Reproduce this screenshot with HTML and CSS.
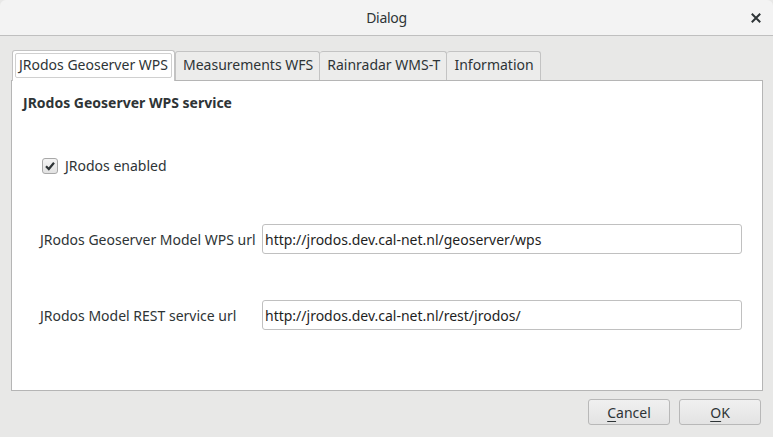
FILE: index.html
```html
<!DOCTYPE html>
<html>
<head>
<meta charset="utf-8">
<link rel="stylesheet" href="styles.css">
</head>
<body>
<div class="window">
  <div class="titlebar">
    <span class="title">Dialog</span>
    <span class="close">
      <svg width="10" height="10" viewBox="0 0 10 10"><path d="M1.5 1.5 L8.5 8.5 M8.5 1.5 L1.5 8.5" stroke="#2e3436" stroke-width="2" stroke-linecap="square"/></svg>
    </span>
  </div>
  <div class="content">
    <div class="tabs">
      <div class="tab active">JRodos Geoserver WPS</div>
      <div class="tab">Measurements WFS</div>
      <div class="tab">Rainradar WMS-T</div>
      <div class="tab">Information</div>
    </div>
    <div class="panel">
      <div class="heading">JRodos Geoserver WPS service</div>
      <label class="check">
        <span class="box">
          <svg width="12" height="12" viewBox="0 0 12 12"><path d="M2 6.2 L4.8 9 L10 2.8" fill="none" stroke="#2e3436" stroke-width="2.2"/></svg>
        </span>
        <span>JRodos enabled</span>
      </label>
      <div class="row row1">
        <span class="lbl">JRodos Geoserver Model WPS url</span>
        <div class="input">http://jrodos.dev.cal-net.nl/geoserver/wps</div>
      </div>
      <div class="row row2">
        <span class="lbl">JRodos Model REST service url</span>
        <div class="input">http://jrodos.dev.cal-net.nl/rest/jrodos/</div>
      </div>
    </div>
    <div class="buttons">
      <div class="btn"><u>C</u>ancel</div>
      <div class="btn"><u>O</u>K</div>
    </div>
  </div>
</div>
</body>
</html>
```
FILE: styles.css
```css
* { box-sizing: border-box; }
html, body { margin: 0; padding: 0; background: #e8e8e7; }
body {
  font-family: "Noto Sans", "Open Sans", sans-serif;
  font-size: 14px;
  color: #2e3436;
  width: 773px;
  height: 437px;
  overflow: hidden;
}
.window { width: 773px; height: 437px; display: flex; flex-direction: column; }
.titlebar {
  height: 36px;
  background: #f3f3f3;
  border-bottom: 1px solid #bfbfbf;
  border-radius: 6px 6px 0 0;
  display: flex;
  align-items: center;
  justify-content: center;
  position: relative;
  flex: none;
}
.title { font-size: 14px; color: #2e3436; letter-spacing: -0.3px; margin-top: -1px; }
.close { position: absolute; right: 12px; top: 13px; width: 10px; height: 10px; display: flex; }
.content { flex: 1; display: flex; flex-direction: column; padding: 13px 10px 0 11px; }
.tabs { display: flex; height: 31px; padding-left: 1px; align-items: flex-end; }
.tab {
  height: 29px;
  padding: 0 6px 3px 7px;
  border: 1px solid #c3c3c3;
  border-bottom: none;
  border-left: none;
  background: #ececeb;
  display: flex;
  align-items: center;
  border-radius: 3px 3px 0 0;
  color: #2e3436;
  white-space: nowrap;
}
.tab:nth-child(2) { border-left: 1px solid #c3c3c3; }
.tab.active {
  height: 31px;
  background: #ffffff;
  border: 1px solid #c3c3c3;
  border-bottom: none;
  padding: 0 6px 3px 6px;
  position: relative;
  z-index: 1;
  margin-bottom: -1px;
}
.tab.active::after {
  content: "";
  position: absolute;
  left: 2px; right: 2px; top: 2px; bottom: 3px;
  border: 1px solid #d0d0d0;
  border-radius: 2px;
}
.panel {
  height: 311px;
  background: #ffffff;
  border: 1px solid #b5b5b5;
  display: flex;
  flex-direction: column;
  padding: 12px 0 0 11px;
}
.heading { font-weight: bold; font-size: 14px; line-height: 20px; }
.check { display: flex; align-items: center; gap: 7px; margin: 43px 0 0 19px; line-height: 20px; }
.box {
  width: 16px; height: 16px;
  border: 1px solid #a8a8a8;
  border-radius: 3px;
  background: linear-gradient(#f4f4f4, #e2e2e2);
  display: flex; align-items: center; justify-content: center;
}
.row { display: flex; align-items: center; margin-left: 17px; }
.row1 { margin-top: 48px; }
.row2 { margin-top: 46px; }
.lbl { width: 222px; flex: none; }
.input {
  width: 480px;
  height: 30px;
  border: 1px solid #c0c0c0;
  border-radius: 3px;
  background: #fff;
  display: flex;
  align-items: center;
  padding-left: 2px;
  color: #1e1e1e;
}
.buttons { display: flex; justify-content: flex-end; gap: 9px; margin-top: 8px; padding-right: 2px; }
.btn {
  width: 82px;
  height: 26px;
  border: 1px solid #b8b8b8;
  border-radius: 3px;
  background: linear-gradient(#f0f0f0, #e3e3e3);
  display: flex; align-items: center; justify-content: center;
  color: #2e3436;
}
.btn u { text-underline-offset: 3px; }
```
